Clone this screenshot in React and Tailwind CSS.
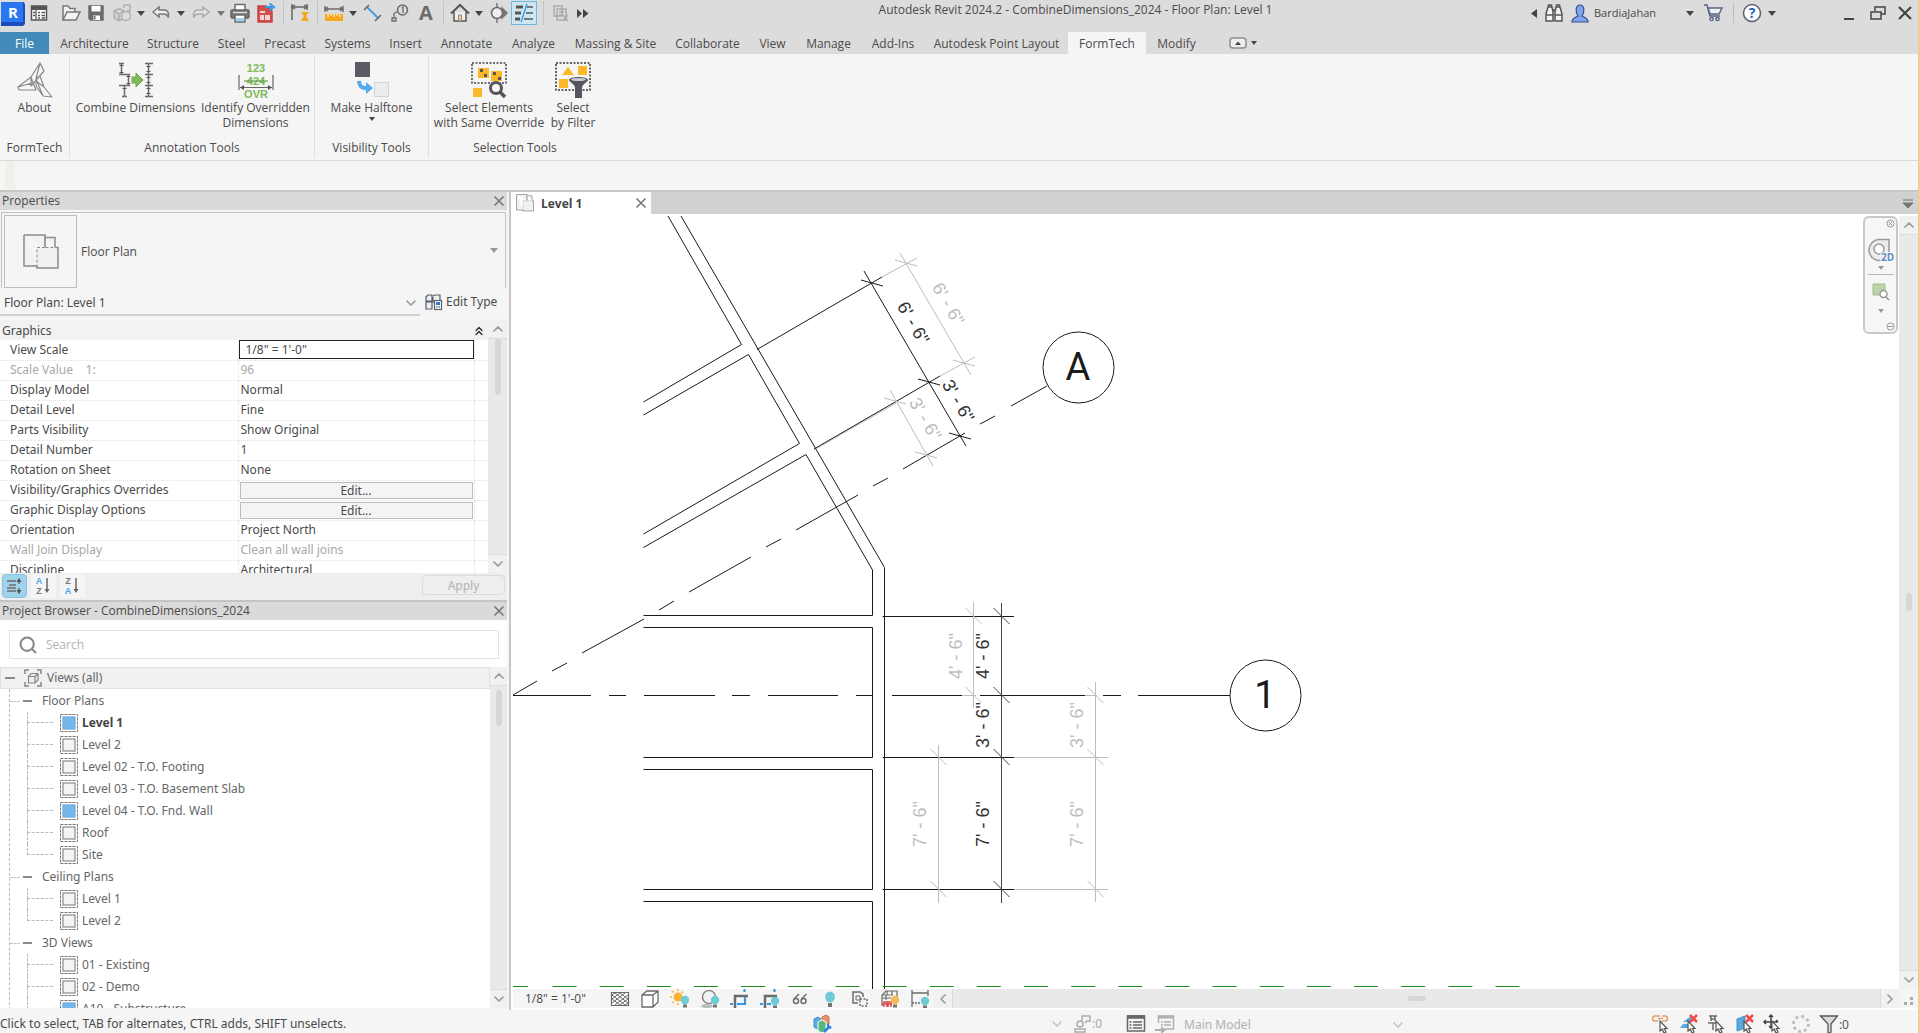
import React, { useState } from 'react';
import { ChevronDown, ChevronLeft, ChevronRight, ChevronUp, ChevronsUp, Search, X } from 'lucide-react';

const Svg = ({ w = 20, h = 20, children, className = '' }) => (
  <svg width={w} height={h} viewBox={`0 0 ${w} ${h}`} fill="none" stroke="#6b6b6b" strokeWidth="1.5" className={`block shrink-0 overflow-visible ${className}`} aria-hidden="true">
    {children}
  </svg>
);

const Caret = ({ color = '#444' }) => (
  <Svg w={8} h={5}>
    <path d="M0 0h8L4 5z" fill={color} stroke="none" />
  </Svg>
);

const Cursor = ({ x = 9, y = 7 }) => (
  <path transform={`translate(${x} ${y})`} d="M0 0v10l2.300-2 1.700 4 2-1-1.700-3.500H7z" fill="#fff" stroke="#555" strokeWidth="1.200" />
);

const Bulb = ({ x = 15, y = 11, color = '#6ccbd6' }) => (
  <g stroke="none">
    <circle cx={x} cy={y} r="4.200" fill={color} />
    <rect x={x - 2} y={y + 4.5} width="4" height="3" fill="#777" />
  </g>
);

/* ---------- quick access toolbar ---------- */

const quickAccess = [
  {
    name: 'Revit', width: 'w-[26px]',
    icon: (
      <Svg w={26} h={25}>
        <path d="M1 3l2-2h21l1 3v19l-2 2H1z" fill="#1b4fc0" stroke="none" />
        <rect x="1" y="1" width="22" height="20" fill="#2a78f0" stroke="none" />
        <text x="8" y="17" fill="#fff" stroke="none" fontSize="15" fontWeight="700" fontFamily="Open Sans, sans-serif">R</text>
      </Svg>
    ),
  },
  {
    name: 'Home', width: 'w-[25px]',
    icon: (
      <Svg w={18} h={18}>
        <rect x="1.500" y="2" width="15" height="14" fill="#fff" stroke="#555" />
        <path d="M1 4h16" stroke="#555" strokeWidth="4" />
        <path d="M6 5v11" />
        <path d="M8 8.500h2M11.500 8.500h3.500M8 11.500h2M11.500 11.500h3.500M8 14h2M11.500 14h3.500M3 8.500h2M3 11.500h2" stroke="#555" />
      </Svg>
    ),
  },
  {
    name: 'Open', width: 'w-8', end: true,
    icon: (
      <Svg w={20} h={18}>
        <path d="M2 16V2h5l2 2.500h5V8M2 16l4-8h13l-4 8z" fill="#f3f3f3" stroke="#777" />
      </Svg>
    ),
  },
  {
    name: 'Save', width: 'w-[26px]',
    icon: (
      <Svg w={18} h={18}>
        <path d="M2 2h14v14H3.500L2 14.500z" fill="#6b6b6b" stroke="#6b6b6b" />
        <path d="M4.500 2h9v5.500h-9zM6 11.500h7V16H6z" fill="#fff" stroke="none" />
        <path d="M7.500 12v3.500" strokeWidth="2" />
      </Svg>
    ),
  },
  {
    name: 'Synchronize', width: 'w-[26px]',
    icon: (
      <Svg w={20} h={20}>
        <path d="M2 8l5-2.500L12 8v7l-5 3-5-3zM2 8l5 3 5-3M7 11v7" stroke="#b0b0b0" fill="#d0d0d0" />
        <circle cx="14" cy="13" r="4.500" stroke="#b0b0b0" fill="#dcdcdc" />
        <path d="M12 5V2h6v6h-3" stroke="#b0b0b0" />
      </Svg>
    ),
  },
  { name: 'Synchronize options', width: 'w-[12px]', icon: <Caret /> },
  {
    name: 'Undo', width: 'w-[28px]',
    icon: (
      <Svg w={20} h={18}>
        <path d="M2 8l6-5v3h5c4 0 5 3 4.500 7.500C16.500 11 15 10 13 10H8v3z" fill="#f0f0f0" stroke="#777" />
      </Svg>
    ),
  },
  { name: 'Undo history', width: 'w-[12px]', icon: <Caret /> },
  {
    name: 'Redo', width: 'w-[28px]',
    icon: (
      <Svg w={20} h={18}>
        <path d="M18 8l-6-5v3H7c-4 0-5 3-4.500 7.500C3.500 11 5 10 7 10h5v3z" fill="#e4e4e4" stroke="#aaa" />
      </Svg>
    ),
  },
  { name: 'Redo history', width: 'w-[12px]', icon: <Caret color="#777" /> },
  {
    name: 'Print', width: 'w-[26px]',
    icon: (
      <Svg w={20} h={20}>
        <path d="M5 7V1.500h10V7" fill="#fff" />
        <rect x="1" y="7" width="18" height="8" rx="1" fill="#777" stroke="#666" />
        <rect x="5" y="12" width="10" height="7" fill="#fff" />
        <path d="M6 15h8v3H6z" fill="#9bd4f5" stroke="none" />
        <path d="M3 9.500h14" stroke="#ddd" />
      </Svg>
    ),
  },
  {
    name: 'Export PDF', width: 'w-[26px]',
    icon: (
      <Svg w={20} h={20}>
        <path d="M2 3h8l6 5v11H2z" fill="#d2504c" stroke="#c8423f" />
        <path d="M4 8h5v2H4zM4 12h4v5H4zM9 12h5v5H9z" fill="#f4d5d3" stroke="none" />
        <path d="M9 4h7M13.500 0.500L18 4l-4.500 3.500" stroke="#2f9be8" strokeWidth="2" />
      </Svg>
    ),
  },
  { name: 'sep', width: 'w-[8px]' },
  {
    name: 'Aligned Dimension', width: 'w-[26px]',
    icon: (
      <Svg w={20} h={20}>
        <path d="M2 1v16M17 1v6M2 4h15" stroke="#666" />
        <path d="M5 2L2 4l3 2M14 2l3 2-3 2" stroke="#666" />
        <path d="M11 9h8l-3 4 3 5h-8l3-5z" fill="#f4a71d" stroke="none" />
      </Svg>
    ),
  },
  { name: 'sep', width: 'w-[8px]' },
  {
    name: 'Measure', width: 'w-[26px]',
    icon: (
      <Svg w={20} h={18}>
        <path d="M1 5h18M1 2v6M19 2v6M4 3L1.500 5 4 7M16 3l2.500 2L16 7" />
        <rect x="1" y="10" width="18" height="7" fill="#f5a81c" stroke="none" />
        <path d="M4 10v3M7 10v2M10 10v3M13 10v2M16 10v3" stroke="#fff" strokeWidth="1" />
      </Svg>
    ),
  },
  { name: 'Measure options', width: 'w-[12px]', icon: <Caret /> },
  {
    name: 'Dimension', width: 'w-[28px]',
    icon: (
      <Svg w={20} h={20}>
        <path d="M4 4l11 11" stroke="#3ba0ea" strokeWidth="1.800" />
        <path d="M1 7l5-5M12 18l6-6" stroke="#666" />
      </Svg>
    ),
  },
  {
    name: 'Tag by Category', width: 'w-[26px]',
    icon: (
      <Svg w={18} h={18}>
        <circle cx="11.500" cy="6" r="5" />
        <path d="M7 7L3 9.500V14M1 14h4v3H1zM11 4l1-1v6" strokeWidth="1.300" />
      </Svg>
    ),
  },
  {
    name: 'Text', width: 'w-[26px]',
    icon: (
      <Svg w={16} h={20}>
        <text x="1" y="17" fill="#6b6b6b" stroke="none" fontSize="20" fontWeight="700" fontFamily="Open Sans, sans-serif">A</text>
      </Svg>
    ),
  },
  { name: 'sep', width: 'w-[8px]' },
  {
    name: 'Default 3D View', width: 'w-[26px]',
    icon: (
      <Svg w={20} h={20}>
        <path d="M4 9v9h12V9" fill="#eee" stroke="#555" />
        <path d="M1 10.500L10 2l9 8.500" stroke="#555" strokeWidth="2" />
        <path d="M8.500 12h3v6h-3z" fill="#f5cf7a" stroke="#888" strokeWidth="1" />
      </Svg>
    ),
  },
  { name: '3D View options', width: 'w-[12px]', icon: <Caret /> },
  {
    name: 'Section', width: 'w-[26px]',
    icon: (
      <Svg w={18} h={20}>
        <path d="M8 0v20M13 5l5 5-5 5z" fill="#777" stroke="#777" />
        <circle cx="8" cy="10" r="5.500" fill="#eee" />
      </Svg>
    ),
  },
  {
    name: 'Thin Lines', width: 'w-[26px]', active: true,
    icon: (
      <Svg w={22} h={20}>
        <path d="M3 4h7M2 10h6M2 16h5" stroke="#555" strokeWidth="3" />
        <path d="M14 4h6M13 10h7M11 16h9" stroke="#555" strokeWidth="1.500" />
        <path d="M14 1L8 19" stroke="#3ba0ea" />
      </Svg>
    ),
  },
  { name: 'sep', width: 'w-[12px]' },
  {
    name: 'Close Inactive Views', width: 'w-[24px]',
    icon: (
      <Svg w={18} h={18}>
        <path d="M2 2h8v10H2zM5 5h9v11H5z" fill="#ddd" stroke="#aaa" />
        <path d="M7 8h5M7 11h4M11 11l5 6M16 11l-5 6" stroke="#aaa" />
      </Svg>
    ),
  },
  {
    name: 'Customize', width: 'w-[20px]',
    icon: (
      <Svg w={12} h={9}>
        <path d="M0 0l5 4.500L0 9zM6 0l5.500 4.500L6 9z" fill="#444" stroke="none" />
      </Svg>
    ),
  },
];

const QuickAccess = () => (
  <div className="flex h-[26px] w-[620px] shrink-0 items-center">
    {quickAccess.map((item, i) =>
      item.name === 'sep' ? (
        <div key={i} className={`flex shrink-0 justify-center ${item.width}`}>
          <div className="h-6 w-px bg-[#c4c4c4]" />
        </div>
      ) : (
        <button
          key={i}
          type="button"
          aria-label={item.name}
          className={`flex h-6 shrink-0 items-center ${item.end ? 'justify-end pr-[2px]' : 'justify-center'} ${item.active ? 'border border-[#6cbbe0] bg-[#cfe6f1]' : ''} ${item.width}`}
        >
          {item.icon}
        </button>
      )
    )}
  </div>
);

const TitleBar = () => (
  <header className="flex h-8 items-start bg-[#dcdcdc] text-[#4a4a4a]">
    <QuickAccess />
    <h1 className="h-5 flex-1 text-center text-[12px] leading-5 whitespace-nowrap">Autodesk Revit 2024.2 - CombineDimensions_2024 - Floor Plan: Level 1</h1>
    <div className="flex h-[26px] shrink-0 items-center justify-end">
      <button type="button" aria-label="Collapse search" className="mr-2">
        <Svg w={6} h={9}><path d="M6 0v9L0 4.500z" fill="#444" stroke="none" /></Svg>
      </button>
      <button type="button" aria-label="Search help" className="mr-2">
        <Svg w={18} h={18}>
          <path d="M1 10l2-7h4l1 5v9H1zM17 10l-2-7h-4l-1 5v9h7zM1 11h7M10 11h7M8 6h2M3.500 3V1h3v2M11.500 3V1h3v2" fill="#f2f2f2" stroke="#555" />
        </Svg>
      </button>
      <button type="button" className="mr-[30px] flex items-center gap-[5px] text-[11px]">
        <Svg w={18} h={19}>
          <path d="M1 18c0-4 3-4 6-6C4.500 9 4 1 9 1s4.500 8 2 11c3 2 6 2 6 6z" fill="#7ea4ee" stroke="#3a4f8a" strokeWidth="1.200" />
        </Svg>
        BardiaJahan
      </button>
      <Caret />
      <button type="button" aria-label="App store" className="mr-2.5 ml-2.5">
        <Svg w={19} h={18}>
          <path d="M0 1h3l3 11h10" stroke="#5a6484" />
          <path d="M4 4h14l-3 6H6z" fill="#eef0f6" stroke="#5a6484" />
          <circle cx="7.500" cy="15" r="1.600" fill="#fff" stroke="#5a6484" />
          <circle cx="13.500" cy="15" r="1.600" fill="#fff" stroke="#5a6484" />
        </Svg>
      </button>
      <div className="mr-2 h-5 w-px bg-[#bdbdbd]" />
      <button type="button" aria-label="Help" className="mr-1.5">
        <Svg w={20} h={20}>
          <circle cx="10" cy="10" r="8.500" fill="#fff" stroke="#555f70" />
          <text x="10" y="15" textAnchor="middle" fill="#2b5fc0" stroke="none" fontSize="14" fontWeight="700" fontFamily="Open Sans, sans-serif">?</text>
        </Svg>
      </button>
      <Caret />
      <button type="button" aria-label="Minimize" className="mt-3 ml-[68px] h-[2px] w-[10px] bg-[#444]" />
      <button type="button" aria-label="Restore" className="ml-4">
        <Svg w={16} h={14}>
          <path d="M5 5V1h10v7h-4M1 6h10v7H1z" stroke="#444" />
        </Svg>
      </button>
      <button type="button" aria-label="Close" className="mr-[6px] ml-3">
        <Svg w={14} h={14}><path d="M1 1l12 12M13 1L1 13" stroke="#444" strokeWidth="2.200" /></Svg>
      </button>
    </div>
  </header>
);

/* ---------- ribbon ---------- */

const tabs = [
  ['Architecture', 'w-[87px]'], ['Structure', 'w-[70px]'], ['Steel', 'w-[47px]'], ['Precast', 'w-[60px]'],
  ['Systems', 'w-[65px]'], ['Insert', 'w-[51px]'], ['Annotate', 'w-[71px]'], ['Analyze', 'w-[63px]'],
  ['Massing & Site', 'w-[101px]'], ['Collaborate', 'w-[83px]'], ['View', 'w-[47px]'], ['Manage', 'w-[65px]'],
  ['Add-Ins', 'w-[64px]'], ['Autodesk Point Layout', 'w-[143px]'], ['FormTech', 'w-[78px]'], ['Modify', 'w-[61px]'],
];

const RibbonTabs = ({ active, onSelect }) => (
  <nav className="flex h-[22px] bg-[#dcdcdc] text-[12px] text-[#4a4a4a]">
    <button type="button" className="mr-[2px] w-[49px] bg-[#418ab9] pt-[2px] text-white">File</button>
    {tabs.map(([label, width]) => (
      <button
        key={label}
        type="button"
        onClick={() => onSelect(label)}
        className={`shrink-0 pt-[2px] whitespace-nowrap ${width} ${active === label ? 'bg-[#f5f5f5]' : ''}`}
      >
        {label}
      </button>
    ))}
    <button type="button" aria-label="Minimize ribbon" className="ml-[22px] flex items-center gap-1">
      <Svg w={18} h={12}>
        <rect x="1" y="1" width="16" height="10" rx="3" fill="#eee" stroke="#888d96" />
        <path d="M6 8h6L9 4.500z" fill="#444" stroke="none" />
      </Svg>
      <Svg w={6} h={4}><path d="M0 0h6L3 4z" fill="#444" stroke="none" /></Svg>
    </button>
  </nav>
);

const AboutIcon = () => (
  <Svg w={36} h={36}>
    <g stroke="#8a8a8a" strokeWidth="1.200" strokeLinejoin="round">
      <path d="M23 1l-9 14v9l13-15zM23 1l-4 16M14 15l-13 10 1 3h17l-3-7zM1 25l14-4M19 17l4-3 4 11 8 10-9-1-7-10zM19 17l7 17M27 25l-8-6" />
    </g>
  </Svg>
);

const CombineIcon = () => (
  <Svg w={36} h={36}>
    <g stroke="#6a6a70">
      <path d="M3.500 1v11M1 1.500h5M1 12.500h11M10.500 12v12M1 23.500h11M6.500 24v11M4 34.500h5" />
      <path d="M30.500 1v34M27 1.500h8M27 12.500h8M27 23.500h8M27 34.500h8" />
    </g>
    <path d="M14 15h4v-4l7 7-7 7v-4h-4z" fill="#7fba55" stroke="#6aa545" strokeWidth="1" />
    <path d="M1.500 3h4v1h-4zM1.500 10h4v1h-4zM8.500 14h4v1h-4zM8.500 21h4v1h-4zM4.500 26h4v1h-4zM28.500 4h4v1h-4zM28.500 9h4v1h-4zM28.500 15h4v1h-4zM28.500 20h4v1h-4zM28.500 26h4v1h-4zM28.500 31h4v1h-4z" fill="#55555c" stroke="none" />
  </Svg>
);

const IdentifyIcon = () => (
  <Svg w={36} h={36}>
    <g fill="#7cba59" stroke="none" fontSize="11" fontFamily="Liberation Sans, sans-serif" fontWeight="700" textAnchor="middle">
      <text x="18" y="10">123</text>
      <text x="18" y="23">424</text>
      <text x="18" y="36">OVR</text>
    </g>
    <path d="M1 13v15M35 13v15M2 25.500h32" stroke="#666" strokeWidth="1.200" />
    <path d="M6 23l-4 2.500L6 28zM30 23l4 2.500-4 2.500z" fill="#555" stroke="none" />
    <path d="M6 19h24" stroke="#4f8a35" strokeWidth="1" />
  </Svg>
);

const HalftoneIcon = () => (
  <Svg w={36} h={36}>
    <rect x="1" y="0" width="15" height="15" fill="#5b5b66" stroke="none" />
    <path d="M3 19c1 7 4 9 9 9v4l7-6-7-6v4c-3 0-5-1-5-5z" fill="#4fabf0" stroke="none" />
    <rect x="20.500" y="20.500" width="14" height="14" fill="#ededed" stroke="#d4d4d4" strokeWidth="1" />
  </Svg>
);

const SameOverrideIcon = () => (
  <Svg w={36} h={36}>
    <rect x="1" y="1" width="34" height="20" stroke="#444" strokeDasharray="2 1.500" />
    <path d="M7 6h11v10H7zM20 9h11v10H20z" fill="#fcb826" stroke="none" />
    <path d="M9 7h3v3H9zM13 12h3v3h-3zM22 10h3v3h-3zM27 15h3v3h-3z" fill="#55555c" stroke="none" />
    <path d="M2 26h9v9H2z" fill="#fcb826" stroke="none" />
    <circle cx="25" cy="26" r="5.500" fill="#f8f8f8" stroke="#55555c" strokeWidth="3" />
    <path d="M29 30l5 5" stroke="#55555c" strokeWidth="3.500" />
  </Svg>
);

const FilterIcon = () => (
  <Svg w={36} h={36}>
    <rect x="1" y="1" width="34" height="27" stroke="#333" strokeDasharray="2 1.500" />
    <path d="M7 13l6-8 6 8zM23 4h9v9h-9zM4 17h9v9H4z" fill="#fcb826" stroke="none" />
    <path d="M14 18c0-4 19-4 19 0 0 2-6 4-6 8v10h-7V26c0-4-6-6-6-8z" fill="#55555c" stroke="none" />
    <ellipse cx="23.500" cy="17.500" rx="7.500" ry="1.600" fill="#c9c9cf" stroke="none" />
  </Svg>
);

const panels = [
  { title: 'FormTech', width: 'w-[70px]', tools: [{ lines: ['About'], width: 'w-[69px]', icon: <AboutIcon /> }] },
  {
    title: 'Annotation Tools', width: 'w-[245px]',
    tools: [
      { lines: ['Combine Dimensions'], width: 'w-[127px]', icon: <CombineIcon /> },
      { lines: ['Identify Overridden', 'Dimensions'], width: 'w-[113px]', icon: <IdentifyIcon /> },
    ],
  },
  { title: 'Visibility Tools', width: 'w-[114px]', tools: [{ lines: ['Make Halftone'], width: 'w-[112px]', icon: <HalftoneIcon />, menu: true }] },
  {
    title: 'Selection Tools', width: 'w-[172px]', last: true,
    tools: [
      { lines: ['Select Elements', 'with Same Override'], width: 'w-[116px]', icon: <SameOverrideIcon /> },
      { lines: ['Select', 'by Filter'], width: 'w-[52px]', icon: <FilterIcon /> },
    ],
  },
];

const Ribbon = () => (
  <section className="flex h-[107px] border-b border-[#dadada] bg-[#f5f5f5] pt-px pb-[2px] text-[12px] text-[#4a4a4a]">
    {panels.map((panel) => (
      <div key={panel.title} className={`flex shrink-0 flex-col ${panel.width} ${panel.last ? '' : 'border-r border-[#e0e0e0]'}`}>
        <div className="flex flex-1 items-start justify-center pt-[7px]">
          {panel.tools.map((tool) => (
            <button key={tool.lines[0]} type="button" className={`flex flex-col items-center leading-[15px] whitespace-nowrap ${tool.width}`}>
              {tool.icon}
              <span className="mt-[2px]">{tool.lines[0]}</span>
              {tool.lines[1] && <span>{tool.lines[1]}</span>}
              {tool.menu && <span className="pt-[2px]"><Svg w={6} h={4}><path d="M0 0h6L3 4z" fill="#444" stroke="none" /></Svg></span>}
            </button>
          ))}
        </div>
        <h2 className="h-[18px] text-center leading-4 whitespace-nowrap">{panel.title}</h2>
      </div>
    ))}
  </section>
);

/* ---------- properties palette ---------- */

const PlanIcon = ({ size = 36 }) => (
  <svg width={size} height={size} viewBox="0 0 36 36" fill="#f1f1f1" stroke="#8a8a8a" strokeWidth="1.500" className="block shrink-0" aria-hidden="true">
    <path d="M1 1h21v12M1 1v31h13M22 3.500h10V13" />
    <path d="M14 13.500h21V34H14z" stroke="none" />
    <path d="M32 13.500h3V34H14v-2" fill="none" />
    <path d="M22 4v9.500h10M22 13.500h-8V34" fill="none" strokeWidth="1" strokeDasharray="3 2" />
  </svg>
);

const PaletteHeader = ({ title }) => (
  <div className="flex h-[18px] shrink-0 items-center justify-between bg-[#dadada] pl-[2px]">
    <h2 className="font-['Open_Sans',sans-serif] text-[12px] leading-4">{title}</h2>
    <button type="button" aria-label={`Close ${title}`}>
      <X className="size-4 text-[#777]" strokeWidth={2.5} />
    </button>
  </div>
);

const VerticalScroll = ({ width, thumb }) => (
  <div className={`flex shrink-0 flex-col bg-[#e9e9e9] ${width}`}>
    <button type="button" aria-label="Scroll up" className="flex h-[19px] items-center justify-center border-b border-[#dcdcdc] bg-[#f1f1f1]">
      <ChevronUp className="size-4 text-[#999]" strokeWidth={2.5} />
    </button>
    <div className="flex flex-1 flex-col items-center">
      <div className={`w-[6px] rounded-full bg-[#d6d6d6] ${thumb}`} />
    </div>
    <button type="button" aria-label="Scroll down" className="flex h-[19px] items-center justify-center border-t border-[#dcdcdc] bg-[#f1f1f1]">
      <ChevronDown className="size-4 text-[#999]" strokeWidth={2.5} />
    </button>
  </div>
);

const properties = [
  { name: 'View Scale', value: '1/8" = 1\'-0"', kind: 'input' },
  { name: 'Scale Value    1:', value: '96', disabled: true },
  { name: 'Display Model', value: 'Normal' },
  { name: 'Detail Level', value: 'Fine' },
  { name: 'Parts Visibility', value: 'Show Original' },
  { name: 'Detail Number', value: '1' },
  { name: 'Rotation on Sheet', value: 'None' },
  { name: 'Visibility/Graphics Overrides', value: 'Edit...', kind: 'button' },
  { name: 'Graphic Display Options', value: 'Edit...', kind: 'button' },
  { name: 'Orientation', value: 'Project North' },
  { name: 'Wall Join Display', value: 'Clean all wall joins', disabled: true },
  { name: 'Discipline', value: 'Architectural' },
];

const PropertyValue = ({ item }) => {
  if (item.kind === 'input') {
    return (
      <input
        type="text"
        aria-label={item.name}
        defaultValue={item.value}
        className="block h-[19px] w-full border border-[#222] bg-white px-[6px] text-[12px] outline-none"
      />
    );
  }
  if (item.kind === 'button') {
    return (
      <div className="px-px">
        <button type="button" aria-label={`Edit ${item.name}`} className="block h-[17px] w-full border border-[#bdbdbd] bg-[#f4f4f4] leading-[15px]">
          {item.value}
        </button>
      </div>
    );
  }
  return <span className="pl-[2px]">{item.value}</span>;
};

const SortLetters = ({ top, bottom }) => (
  <Svg w={18} h={18}>
    <g stroke="none" fontSize="9" fontWeight="700" fontFamily="Liberation Sans, sans-serif" textAnchor="middle">
      <text x="4" y="7" fill={top === 'A' ? '#4ba6e8' : '#777'}>{top}</text>
      <text x="4" y="17" fill={bottom === 'A' ? '#4ba6e8' : '#777'}>{bottom}</text>
    </g>
    <path d="M12 1v13" stroke="#666" />
    <path d="M9.500 12l2.500 4 2.500-4z" fill="#666" stroke="none" />
  </Svg>
);

const sortButtons = [
  {
    name: 'Sort by group', active: true,
    icon: (
      <Svg w={18} h={16}>
        <path d="M1 3h9M3 7h7M1 10h9M1 13h9M13 1v5M13 10v5" />
        <path d="M10.500 4L13 0l2.500 4zM10.500 12l2.500 4 2.500-4z" fill="#555" stroke="none" />
      </Svg>
    ),
  },
  { name: 'Sort ascending', icon: <SortLetters top="A" bottom="Z" /> },
  { name: 'Sort descending', icon: <SortLetters top="Z" bottom="A" /> },
];

const PropertiesPalette = () => (
  <section className="flex h-[408px] shrink-0 flex-col bg-[#f5f5f5]">
    <PaletteHeader title="Properties" />
    <button type="button" className="mx-px mt-[2px] flex h-[76px] items-center border border-b-0 border-[#c2c2c2] pl-[2px] text-left">
      <span className="mt-[2px] flex h-[73px] w-[73px] items-center justify-center border border-[#bdbdbd]">
        <PlanIcon size={36} />
      </span>
      <span className="ml-1 flex-1 pt-[2px] font-['Open_Sans',sans-serif]">Floor Plan</span>
      <span className="mr-[7px]"><Caret color="#999" /></span>
    </button>
    <div className="flex h-8 pt-1">
      <div className="flex h-6 w-[420px] items-center justify-between border-b-2 border-[#d0d0d0] pr-px pl-1">
        <span>Floor Plan: Level 1</span>
        <ChevronDown className="size-4 text-[#999]" strokeWidth={2.5} />
      </div>
      <button type="button" className="ml-[5px] flex h-5 items-center gap-1">
        <Svg w={17} h={17}>
          <path d="M1 3l2-2h4v6H1zM8 2l2-1h5v5M1 8h6v7H1zM8 3v5h3" fill="#eee" stroke="#555f70" strokeWidth="1.200" />
          <rect x="9.500" y="6.500" width="7" height="9" fill="#fff" stroke="#555f70" strokeWidth="1.200" />
          <path d="M11 8h4v3h-4z" fill="#2f7ad0" stroke="none" />
          <path d="M11 13h4" stroke="#777" strokeDasharray="1.500 1" />
        </Svg>
        Edit Type
      </button>
    </div>
    <div className="flex min-h-0 flex-1">
      <div className="min-w-0 flex-1 overflow-hidden bg-white">
        <div className="flex h-5 items-center justify-between bg-[#f2f2f2] pt-px pr-[2px] pl-[2px]">
          <h3>Graphics</h3>
          <ChevronsUp className="size-[14px] text-[#333]" strokeWidth={2.5} />
        </div>
        <table className="w-full table-fixed border-collapse">
          <tbody>
            {properties.map((item) => (
              <tr key={item.name} className={`h-5 border-b border-dotted border-[#e2e2e2] leading-[18px] ${item.disabled ? 'text-[#a8a8a8]' : ''}`}>
                <th scope="row" className="w-[238px] border-r border-dotted border-[#e2e2e2] p-0 pl-[10px] text-left font-normal whitespace-pre">{item.name}</th>
                <td className="border-r border-dotted border-[#e2e2e2] p-0"><PropertyValue item={item} /></td>
                <td className="w-[14px] p-0" />
              </tr>
            ))}
          </tbody>
        </table>
      </div>
      <VerticalScroll width="w-[19px]" thumb="h-14" />
    </div>
    <div className="flex h-[27px] shrink-0 items-start bg-[#eeeeee] px-[2px] pt-px">
      {sortButtons.map((button) => (
        <button
          key={button.name}
          type="button"
          aria-label={button.name}
          className={`mr-1 flex h-6 w-[25px] items-center justify-center ${button.active ? 'rounded-sm border border-[#82c4e3] bg-[#9fd3ec]' : 'bg-[#f5f5f5]'}`}
        >
          {button.icon}
        </button>
      ))}
      <button type="button" disabled className="mt-px ml-auto h-5 w-[83px] rounded-sm border border-[#dadada] pt-px text-[#b3b3b3]">Apply</button>
    </div>
  </section>
);

/* ---------- project browser ---------- */

const tree = [
  {
    label: 'Floor Plans',
    views: [
      { label: 'Level 1', placed: true, open: true },
      { label: 'Level 2' },
      { label: 'Level 02 - T.O. Footing' },
      { label: 'Level 03 - T.O. Basement Slab' },
      { label: 'Level 04 - T.O. Fnd. Wall', placed: true },
      { label: 'Roof' },
      { label: 'Site' },
    ],
  },
  { label: 'Ceiling Plans', views: [{ label: 'Level 1' }, { label: 'Level 2' }] },
  {
    label: '3D Views', openEnded: true,
    views: [{ label: '01 - Existing' }, { label: '02 - Demo' }, { label: 'A10 - Substructure', placed: true }],
  },
];

const ViewIcon = ({ placed }) => (
  <Svg w={18} h={18}>
    <rect x="0.500" y="0.500" width="17" height="17" stroke="#777" strokeWidth="1" strokeDasharray="3 1" />
    <rect x="3" y="3" width="12" height="12" fill={placed ? '#76b7ea' : '#f4f4f4'} stroke={placed ? '#68aade' : '#8a8a8a'} strokeWidth="1.200" />
  </Svg>
);

const TreeGroup = ({ group }) => (
  <li>
    <div className="flex h-[22px] items-center">
      <span className="w-[10px] border-t border-dashed border-[#c4c4c4]" />
      <button type="button" aria-label={`Collapse ${group.label}`} className="ml-[3px] h-[2px] w-[9px] bg-[#8a8a8a]" />
      <span className="ml-[10px]">{group.label}</span>
    </div>
    <ul className="ml-[17px]">
      {group.views.map((view, i) => {
        const last = i === group.views.length - 1 && !group.openEnded;
        return (
          <li key={view.label} className="flex h-[22px]">
            <span className="flex w-[26px] flex-col">
              <span className="h-[11px] border-b border-l border-dashed border-[#b8b8b8]" />
              {!last && <span className="h-[11px] border-l border-dashed border-[#b8b8b8]" />}
            </span>
            <a href="#view" className={`ml-[7px] flex items-center gap-1 ${view.open ? 'font-bold text-[#444]' : ''}`}>
              <ViewIcon placed={view.placed} />
              {view.label}
            </a>
          </li>
        );
      })}
    </ul>
  </li>
);

const ProjectBrowser = () => (
  <section className="flex min-h-0 flex-1 flex-col border-t-2 border-[#c4c4c4] bg-white">
    <PaletteHeader title="Project Browser - CombineDimensions_2024" />
    <label className="mt-[10px] mr-2 ml-[9px] flex h-[29px] shrink-0 items-center border border-[#e3e3e3] pt-px pl-2">
      <Search className="size-5 text-[#888]" strokeWidth={2.5} />
      <span className="sr-only">Search</span>
      <input type="search" placeholder="Search" className="ml-2 flex-1 font-['Open_Sans',sans-serif] outline-none placeholder:text-[#b3b3b3]" />
    </label>
    <div className="mt-2 flex min-h-0 flex-1 text-[#666]">
      <div className="min-w-0 flex-1 overflow-hidden">
        <div className="flex h-[22px] items-center border border-[#e0e0e0] bg-[#f1f1f1] pl-1">
          <button type="button" aria-label="Collapse Views" className="h-[2px] w-[10px] bg-[#8a8a8a]" />
          <Svg w={18} h={18} className="mr-[5px] ml-[9px]">
            <path d="M1 5V1h4M13 1h4v4M17 13v4h-4M5 17H1v-4" stroke="#888" />
            <path d="M4.500 7.500L7 4.500h7V11l-3 3H4.500zM4.500 7.500H11V14M11 7.500l3-3" fill="#eee" stroke="#888" strokeWidth="1.200" />
          </Svg>
          Views (all)
        </div>
        <ul className="ml-[9px] border-l border-dashed border-[#b8b8b8] pt-px">
          {tree.map((group) => <TreeGroup key={group.label} group={group} />)}
        </ul>
      </div>
      <VerticalScroll width="w-[17px]" thumb="mt-1 h-[36px]" />
    </div>
  </section>
);

/* ---------- drawing ---------- */

const INK = '#1a1a1a';
const HALF = '#bdbdbd';

const gridA = [
  [1047, 386, 1011, 406], [995, 416, 980, 424], [965, 433, 903, 469], [888, 478, 873, 486],
  [858, 495, 796, 530], [781, 539, 766, 547], [751, 557, 689, 592], [674, 601, 659, 610],
  [644, 619, 582, 653], [567, 663, 552, 671], [537, 681, 513, 695],
];

const grid1 = [
  [513, 591], [609, 626], [644, 715], [732, 750], [768, 838], [856, 873],
  [892, 962], [980, 1085], [1103, 1121], [1138, 1230],
];

// vertical dimension strings: x, top, bottom, tick positions
const verticalDims = [
  { x: 973.5, y1: 602, y2: 708, ticks: [616, 695], color: HALF },
  { x: 938.5, y1: 745, y2: 903, ticks: [757, 889], color: HALF },
  { x: 1095.5, y1: 682, y2: 902, ticks: [695, 757, 889], color: HALF },
  { x: 1001.5, y1: 603, y2: 903, ticks: [616, 695, 757, 889], color: '#444' },
];

const slopedDims = [
  { line: [900, 253, 971, 375], ticks: [[906, 263], [964, 363]], color: HALF },
  { line: [890, 390, 933, 466], ticks: [[895, 401], [926, 455]], color: HALF },
  { line: [864, 271, 966, 446], ticks: [[872, 283], [929, 382], [960, 436]], color: INK },
];

const dimLabels = [
  { x: 962, y: 656, angle: -90, text: '4\' - 6"', color: HALF },
  { x: 926, y: 824, angle: -90, text: '7\' - 6"', color: HALF },
  { x: 1083, y: 725, angle: -90, text: '3\' - 6"', color: HALF },
  { x: 1083, y: 824, angle: -90, text: '7\' - 6"', color: HALF },
  { x: 989, y: 656, angle: -90, text: '4\' - 6"', color: '#333' },
  { x: 989, y: 725, angle: -90, text: '3\' - 6"', color: '#333' },
  { x: 989, y: 824, angle: -90, text: '7\' - 6"', color: '#333' },
  { x: 943, y: 307, angle: 60, text: '6\' - 6"', color: HALF },
  { x: 920, y: 422, angle: 60, text: '3\' - 6"', color: HALF },
  { x: 908, y: 326, angle: 60, text: '6\' - 6"', color: '#333' },
  { x: 953, y: 404, angle: 60, text: '3\' - 6"', color: '#333' },
];

const FloorPlanDrawing = () => (
  <svg viewBox="512 214 1387 775" preserveAspectRatio="xMinYMin slice" className="block h-full w-full" fill="none" stroke={INK} strokeWidth="1" fontFamily="Liberation Sans, Arial, sans-serif">
    {/* walls */}
    <path d="M668 216L741.500 344.500L643.500 402M681 216L884.500 567.500V989" />
    <path d="M643.500 415L748.500 354.500L799.500 443.500L643.500 534M643.500 547.500L806 454.500L872.500 570V615.500H643.500" />
    <path d="M643.500 627.500H872.500V757.500H643.500M643.500 769.500H872.500V889.500H643.500M643.500 901.500H872.500V989" />

    {/* witness lines */}
    <g stroke={HALF}>
      <path d="M882 277L917 258M940 376L975 357M814 450L896 403M1014 757.500H1108M1014 889.500H1108" />
    </g>
    <path d="M757 349.500L882 277M814 449L940 376M882.500 616.500H1014M882.500 757.500H1014M882.500 889.500H1014" />

    {/* grids */}
    {gridA.map(([x1, y1, x2, y2]) => <line key={x1} x1={x1} y1={y1} x2={x2} y2={y2} />)}
    {grid1.map(([x1, x2]) => <line key={x1} x1={x1} y1="695.500" x2={x2} y2="695.500" />)}
    <path d="M962 695.500H976M1085 695.500H1097" stroke={HALF} />
    <circle cx="1078.500" cy="367.500" r="35.500" />
    <circle cx="1265.500" cy="695.500" r="35.500" />
    <g fill={INK} stroke="none" fontSize="38" fontFamily="Roboto, sans-serif" textAnchor="middle">
      <text x="1078" y="380">A</text>
      <text x="1265" y="708">1</text>
    </g>

    {verticalDims.map(({ x, y1, y2, ticks, color }) => (
      <g key={x} stroke={color}>
        <line x1={x} y1={y1} x2={x} y2={y2} />
        {ticks.map((y) => <line key={y} x1={x - 8} y1={y - 8} x2={x + 8} y2={y + 8} />)}
      </g>
    ))}
    {slopedDims.map(({ line, ticks, color }) => (
      <g key={line[0]} stroke={color}>
        <line x1={line[0]} y1={line[1]} x2={line[2]} y2={line[3]} />
        {ticks.map(([x, y]) => <line key={x} x1={x - 11} y1={y - 3} x2={x + 11} y2={y + 3} />)}
      </g>
    ))}
    <g stroke="none" fontSize="18" textAnchor="middle">
      {dimLabels.map(({ x, y, angle, text, color }) => (
        <text key={`${x}-${y}`} x={x} y={y} fill={color} transform={`rotate(${angle} ${x} ${y})`}>{text}</text>
      ))}
    </g>

    <path d="M513 986.500H528" stroke="#1f8a1f" />
    <path d="M552.500 986.500H1522" stroke="#1f8a1f" strokeDasharray="24 23.150" />
  </svg>
);

const NavigationBar = () => (
  <div className="absolute top-[2px] right-px flex h-[118px] w-[35px] flex-col items-center rounded-md border-2 border-[#c8c8c8] bg-[#f6f6f6]">
    <button type="button" aria-label="Close navigation bar" className="mt-[1px] mr-[1px] self-end">
      <Svg w={9} h={9}><circle cx="4.500" cy="4.500" r="3.500" strokeWidth="1" stroke="#999" /><path d="M3 3l3 3M6 3L3 6" stroke="#999" strokeWidth="1" /></Svg>
    </button>
    <button type="button" aria-label="Steering wheel" className="mt-2.5 flex flex-col items-center gap-1">
      <Svg w={26} h={24}>
        <path d="M21 14V1.500H12a10.500 10.500 0 1 0 4 20M21 14a9 9 0 0 1-3 3" fill="#ececec" stroke="#999" />
        <circle cx="11" cy="11" r="5" fill="#fff" stroke="#999" />
        <text x="13" y="23" fill="#5d8fc4" stroke="#f6f6f6" strokeWidth="2" paintOrder="stroke" fontSize="10" fontWeight="700" fontFamily="Open Sans, sans-serif">2D</text>
      </Svg>
      <Svg w={6} h={4}><path d="M0 0h6L3 4z" fill="#999" stroke="none" /></Svg>
    </button>
    <div className="mt-1 h-px w-[26px] bg-[#b8b8b8]" />
    <button type="button" aria-label="Zoom region" className="mt-2 flex flex-col items-center gap-2">
      <Svg w={18} h={18}>
        <path d="M1 1h12v11H1z" fill="#bcd4a8" stroke="#a4bd90" strokeWidth="1" />
        <circle cx="11.500" cy="11" r="3.500" fill="#fff" stroke="#999" />
        <path d="M14 14l3 3" stroke="#999" />
      </Svg>
      <Svg w={6} h={4}><path d="M0 0h6L3 4z" fill="#999" stroke="none" /></Svg>
    </button>
    <button type="button" aria-label="Navigation bar options" className="mt-auto mr-[1px] mb-[1px] self-end">
      <Svg w={9} h={9}><circle cx="4.500" cy="4.500" r="3.500" strokeWidth="1" stroke="#999" /><path d="M2 4.500h5" stroke="#999" strokeWidth="1" /></Svg>
    </button>
  </div>
);

const viewControls = [
  { name: 'Detail level', icon: <Svg><path d="M1.500 3.500h17v13h-17z" fill="#fff" strokeWidth="1.200" /><path d="M2 6l3-2M2 10l8-6M2 14l13-10M5 16L18 6M10 16l8-6M15 16l3-2M5 4l13 10M10 4l8 6M2 6l13 10M2 10l8 6" strokeWidth="1" /></Svg> },
  { name: 'Visual style', icon: <Svg><path d="M2 6l5-4h11v11l-5 5H2zM2 6h11v12M13 6l5-4" fill="#fff" strokeWidth="1.300" /></Svg> },
  { name: 'Sun path', icon: <Svg><circle cx="8" cy="8" r="4.500" fill="#f9b233" stroke="none" /><path d="M8 0v2M8 14v2M0 8h2M2 2l1.500 1.500M13 2.500l-1.500 1.500M2 14l1.500-1.500" stroke="#f9b233" /><Bulb /></Svg> },
  { name: 'Shadows', icon: <Svg><ellipse cx="7" cy="17" rx="6" ry="2" fill="#bbb" stroke="none" /><circle cx="9" cy="8" r="6.500" fill="#f3f3f3" strokeWidth="1.200" /><Bulb /></Svg> },
  { name: 'Crop view', icon: <Svg><path d="M5 19V7h13" strokeWidth="2.500" /><path d="M0 15h3M7 15h8V8M14.500 0v3" stroke="#2f9be8" strokeWidth="2.200" /></Svg> },
  { name: 'Show crop region', icon: <Svg><path d="M5 19V7h12" strokeWidth="2.500" /><path d="M0 15h3M7 15h4M14.500 0v3" stroke="#2f9be8" strokeWidth="2.200" /><Bulb y={12} /></Svg> },
  { name: 'Temporary hide', icon: <Svg><circle cx="6" cy="12" r="2.500" /><circle cx="13.500" cy="12" r="2.500" /><path d="M4 10l5-5M11.500 10l5-5" /></Svg> },
  { name: 'Reveal hidden elements', icon: <Svg><ellipse cx="10" cy="8" rx="4.800" ry="5.500" fill="#6ccbd6" stroke="none" /><path d="M8 14h4v4H8z" fill="#777" stroke="none" /></Svg> },
  { name: 'Temporary view properties', icon: <Svg><path d="M13 8V5l-3-2H3v11h5" /><path d="M6 7h4v4H6z" strokeWidth="1" /><path d="M10 10h7v7h-7z" strokeDasharray="2 1.500" /></Svg> },
  { name: 'Analytical model', icon: <Svg><path d="M2 6l4-4h11v6M2 6h11M2 6v11M7 6V2M12 6V2M2 9h9M6 6v5" strokeWidth="1.200" /><path d="M4 18v-5h3v5M8 18v-5h3v5M2 15h10" stroke="#e04a4a" /><Bulb color="#f7b955" /></Svg> },
  { name: 'Reveal constraints', icon: <Svg><path d="M2 1v17M18 1v6M2 4h16" strokeWidth="1.300" /><path d="M2 14h9" strokeDasharray="2 1" /><Bulb y={12} /></Svg> },
];

const DocumentArea = () => (
  <main className="flex min-w-0 flex-1 flex-col bg-white">
    <div className="flex h-[22px] shrink-0 items-center bg-[#d1d1d1] pr-[5px]">
      <button type="button" className="flex h-[22px] w-[140px] items-center bg-white pr-[2px] pl-[5px] font-['Open_Sans',sans-serif] font-bold text-[#444]">
        <PlanIcon size={18} />
        <span className="ml-[7px] flex-1 pt-px text-left">Level 1</span>
        <X className="size-4 text-[#777]" strokeWidth={2.5} />
      </button>
      <button type="button" aria-label="Tab list" className="ml-auto">
        <Svg w={10} h={9}><path d="M0 1h10M0 4h10L5 9z" fill="#777" stroke="#777" strokeWidth="1" /></Svg>
      </button>
    </div>
    <div className="flex min-h-0 flex-1">
      <div className="relative min-w-0 flex-1 overflow-hidden pl-px">
        <FloorPlanDrawing />
        <NavigationBar />
      </div>
      <VerticalScroll width="mt-[2px] w-[19px]" thumb="mt-[358px] h-[18px]" />
    </div>
    <div className="mb-[2px] ml-[2px] flex h-[19px] shrink-0 bg-[#e9e9e9]">
      <div className="flex w-[421px] shrink-0 items-center bg-[#f5f5f5] pl-3 font-['Open_Sans',sans-serif]">
        <span className="w-[85px] shrink-0">1/8" = 1'-0"</span>
        {viewControls.map((control) => (
          <button key={control.name} type="button" aria-label={control.name} className="mr-[10px] h-[19px] w-5 shrink-0 overflow-hidden last:mr-0">
            {control.icon}
          </button>
        ))}
      </div>
      <button type="button" aria-label="Scroll left" className="flex w-[19px] items-center justify-center border-r border-[#dcdcdc] bg-[#f1f1f1]">
        <ChevronLeft className="size-4 text-[#999]" strokeWidth={2.5} />
      </button>
      <div className="flex flex-1 items-center justify-center">
        <div className="h-[5px] w-[18px] rounded-full bg-[#d6d6d6]" />
      </div>
      <button type="button" aria-label="Scroll right" className="flex w-[19px] items-center justify-center border-l border-[#dcdcdc] bg-[#f1f1f1]">
        <ChevronRight className="size-4 text-[#999]" strokeWidth={2.5} />
      </button>
      <div className="flex w-[19px] items-center justify-center bg-[#f5f5f5] pt-1">
        <Svg w={10} h={8}><path d="M6 0h3v3H6zM0 5h3v3H0zM6 5h3v3H6z" fill="#aaa" stroke="none" /></Svg>
      </div>
    </div>
  </main>
);

/* ---------- status bar ---------- */

const selectTools = [
  { name: 'Select links', icon: <Svg><path d="M9 2H4a2.500 2.500 0 0 0 0 5h3M7 4.500h5M11 7h3a2.500 2.500 0 0 0 0-5h-3" stroke="#e39a6a" /><Cursor /></Svg> },
  { name: 'Select underlay', icon: <Svg><path d="M4 8l8-6v6zM1 14l3-4h8v4z" fill="#5aa9e0" stroke="none" /><path d="M11 1l7 7M18 1l-7 7" stroke="#f04a4a" strokeWidth="2.500" /><Cursor /></Svg> },
  { name: 'Select pinned', icon: <Svg><path d="M2 2h8M4 2v5M8 2v5M1 9h9M6 9v7M4 5h4" /><Cursor /></Svg> },
  { name: 'Select by face', icon: <Svg><path d="M2 5l8-3v12l-8 3z" fill="#5aa9e0" stroke="#3f92cd" strokeWidth="1" /><path d="M11 1l7 7M18 1l-7 7" stroke="#f04a4a" strokeWidth="2.500" /><Cursor /></Svg> },
  { name: 'Drag on selection', icon: <Svg><path d="M8 1v13M1 8h14M6 3l2-2 2 2M6 12l2 2 2-2M3 6L1 8l2 2M13 6l2 2" stroke="#444" /><Cursor /></Svg> },
  { name: 'Background processes', icon: <Svg><circle cx="10" cy="10" r="7.500" stroke="#bbb" strokeWidth="2.800" strokeDasharray="2.800 3.090" /></Svg> },
  { name: 'Filter', icon: <Svg><path d="M1.500 2h17l-6.500 8v8l-3 1.500V10z" fill="#d9d9d9" stroke="#555" strokeWidth="1.300" /></Svg> },
];

const StatusBar = () => (
  <footer className="flex h-[23px] shrink-0 items-center bg-[#f5f5f5] pt-[5px]">
    <span className="w-[812px] shrink-0">Click to select, TAB for alternates, CTRL adds, SHIFT unselects.</span>
    <button type="button" aria-label="Worksets">
      <Svg>
        <path d="M2 5l4-2 3 2v8l-4 2-3-2z" fill="#5aa9e0" stroke="#3f92cd" strokeWidth="1" />
        <path d="M10 3l4-2 3 2v7h-7z" fill="#e8946a" stroke="#c9754a" strokeWidth="1" />
        <path d="M6 8l4-2 4 2v9l-4 2-4-2z" fill="#53b878" stroke="#fff" strokeWidth="1" />
        <path d="M12 18l6-6" stroke="#2f7fe0" strokeWidth="2.500" />
        <path d="M16 10v3.500h3.500" stroke="#2f7fe0" strokeWidth="2" />
      </Svg>
    </button>
    <ChevronDown className="ml-[217px] size-4 text-[#c4c4c4]" strokeWidth={2.5} />
    <button type="button" className="ml-2 flex items-center text-[#aaa]">
      <Svg w={19}>
        <circle cx="7" cy="10" r="3" stroke="#aaa" /><path d="M2 18v-3h10v3zM9 7V2h8v5h-3l-2 2" stroke="#aaa" />
      </Svg>
      :0
    </button>
    <button type="button" aria-label="Design options" className="ml-6">
      <Svg><path d="M1.500 2h17v15h-17z" stroke="#666" /><path d="M1 3h18" stroke="#666" strokeWidth="3.500" /><path d="M3.500 8h2M7 8h9M3.500 11h2M7 11h9M3.500 14h2M7 14h9" stroke="#666" /></Svg>
    </button>
    <button type="button" aria-label="Add to set" className="ml-[9px]">
      <Svg><path d="M3.500 9V2h15v13h-9" stroke="#b0b0b0" /><path d="M3 3h16" stroke="#b0b0b0" strokeWidth="3" /><path d="M6 8h2M9 8h7M6 11h2M9 11h7" stroke="#b0b0b0" /><path d="M0 15h6v-3l5 4-5 4v-3H0z" fill="#b0b0b0" stroke="none" /></Svg>
    </button>
    <button type="button" className="ml-[9px] flex w-[222px] items-center justify-between pt-[2px] text-[#b0b0b0]">
      Main Model
      <ChevronDown className="size-4 text-[#c4c4c4]" strokeWidth={2.5} />
    </button>
    <div className="ml-auto flex items-center gap-[8px] pr-[69px]">
      {selectTools.map((tool) => (
        <button key={tool.name} type="button" aria-label={tool.name}>{tool.icon}</button>
      ))}
      <span className="-ml-2 pt-[2px] text-[#555]">:0</span>
    </div>
  </footer>
);

const App = () => {
  const [activeTab, setActiveTab] = useState('FormTech');

  return (
    <div className="flex h-screen flex-col overflow-hidden border-r border-[#e6d36a] bg-[#f5f5f5] font-['Open_Sans',sans-serif] text-[12px] leading-4 text-[#4a4a4a]">
      <TitleBar />
      <RibbonTabs active={activeTab} onSelect={setActiveTab} />
      <Ribbon />
      <div className="h-[31px] shrink-0 border-b-2 border-[#c6c6c6] pl-[5px]">
        <div className="h-7 w-[10px] bg-[#eef1e8]" />
      </div>
      <div className="flex min-h-0 flex-1 flex-col font-['Noto_Sans','Open_Sans',sans-serif]">
        <div className="flex min-h-0 flex-1">
          <aside className="flex w-[511px] shrink-0 flex-col border-r-2 border-[#c6c6c6] pr-[2px] pb-[2px]">
            <PropertiesPalette />
            <ProjectBrowser />
          </aside>
          <DocumentArea />
        </div>
        <StatusBar />
      </div>
    </div>
  );
};

export default App;
